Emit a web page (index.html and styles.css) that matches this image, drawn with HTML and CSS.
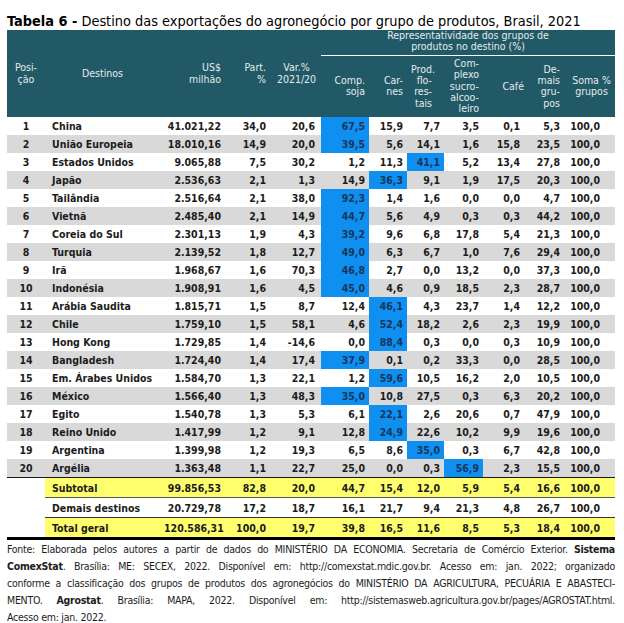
FILE: index.html
```html
<!DOCTYPE html>
<html lang="pt-BR">
<head>
<meta charset="utf-8">
<title>Tabela 6</title>
<link rel="stylesheet" href="styles.css">
</head>
<body>
<div class="page">
  <h1 class="title"><b>Tabela 6 -</b> Destino das exportações do agronegócio por grupo de produtos, Brasil, 2021</h1>
  <table class="tbl">
    <colgroup>
      <col class="c-pos"><col class="c-dest"><col class="c-usd"><col class="c-part"><col class="c-var">
      <col class="c-soja"><col class="c-carn"><col class="c-prod"><col class="c-comp"><col class="c-cafe"><col class="c-dem"><col class="c-soma">
    </colgroup>
    <thead>
      <tr class="h-top">
        <th rowspan="2" class="h-pos">Posi-<br>ção</th>
        <th rowspan="2" class="h-dest">Destinos</th>
        <th rowspan="2" class="h-num">US$<br>milhão</th>
        <th rowspan="2" class="h-num">Part.<br>%</th>
        <th rowspan="2" class="h-var">Var.%<br>2021/20</th>
        <th colspan="7" class="h-group">Representatividade dos grupos de<br>produtos no destino (%)</th>
      </tr>
      <tr class="h-sub">
        <th class="h-num">Comp.<br>soja</th>
        <th class="h-num">Car-<br>nes</th>
        <th class="h-num h-prod">Prod.<br>flo-<br>res-<br>tais</th>
        <th class="h-num h-comp">Com-<br>plexo<br>sucro-<br>alcoo-<br>leiro</th>
        <th class="h-num h-cafe">Café</th>
        <th class="h-num">De-<br>mais<br>gru-<br>pos</th>
        <th class="h-soma">Soma %<br>grupos</th>
      </tr>
    </thead>
    <tbody class="rows">
      <tr><td class="pos">1</td><td class="dest">China</td><td>41.021,22</td><td>34,0</td><td class="var">20,6</td><td class="hl">67,5</td><td>15,9</td><td>7,7</td><td>3,5</td><td>0,1</td><td>5,3</td><td class="soma">100,0</td></tr>
      <tr><td class="pos">2</td><td class="dest">União Europeia</td><td>18.010,16</td><td>14,9</td><td class="var">20,0</td><td class="hl">39,5</td><td>5,6</td><td>14,1</td><td>1,6</td><td>15,8</td><td>23,5</td><td class="soma">100,0</td></tr>
      <tr><td class="pos">3</td><td class="dest">Estados Unidos</td><td>9.065,88</td><td>7,5</td><td class="var">30,2</td><td>1,2</td><td>11,3</td><td class="hl">41,1</td><td>5,2</td><td>13,4</td><td>27,8</td><td class="soma">100,0</td></tr>
      <tr><td class="pos">4</td><td class="dest">Japão</td><td>2.536,63</td><td>2,1</td><td class="var">1,3</td><td>14,9</td><td class="hl">36,3</td><td>9,1</td><td>1,9</td><td>17,5</td><td>20,3</td><td class="soma">100,0</td></tr>
      <tr><td class="pos">5</td><td class="dest">Tailândia</td><td>2.516,64</td><td>2,1</td><td class="var">38,0</td><td class="hl">92,3</td><td>1,4</td><td>1,6</td><td>0,0</td><td>0,0</td><td>4,7</td><td class="soma">100,0</td></tr>
      <tr><td class="pos">6</td><td class="dest">Vietnã</td><td>2.485,40</td><td>2,1</td><td class="var">14,9</td><td class="hl">44,7</td><td>5,6</td><td>4,9</td><td>0,3</td><td>0,3</td><td>44,2</td><td class="soma">100,0</td></tr>
      <tr><td class="pos">7</td><td class="dest">Coreia do Sul</td><td>2.301,13</td><td>1,9</td><td class="var">4,3</td><td class="hl">39,2</td><td>9,6</td><td>6,8</td><td>17,8</td><td>5,4</td><td>21,3</td><td class="soma">100,0</td></tr>
      <tr><td class="pos">8</td><td class="dest">Turquia</td><td>2.139,52</td><td>1,8</td><td class="var">12,7</td><td class="hl">49,0</td><td>6,3</td><td>6,7</td><td>1,0</td><td>7,6</td><td>29,4</td><td class="soma">100,0</td></tr>
      <tr><td class="pos">9</td><td class="dest">Irã</td><td>1.968,67</td><td>1,6</td><td class="var">70,3</td><td class="hl">46,8</td><td>2,7</td><td>0,0</td><td>13,2</td><td>0,0</td><td>37,3</td><td class="soma">100,0</td></tr>
      <tr><td class="pos">10</td><td class="dest">Indonésia</td><td>1.908,91</td><td>1,6</td><td class="var">4,5</td><td class="hl">45,0</td><td>4,6</td><td>0,9</td><td>18,5</td><td>2,3</td><td>28,7</td><td class="soma">100,0</td></tr>
      <tr><td class="pos">11</td><td class="dest">Arábia Saudita</td><td>1.815,71</td><td>1,5</td><td class="var">8,7</td><td>12,4</td><td class="hl">46,1</td><td>4,3</td><td>23,7</td><td>1,4</td><td>12,2</td><td class="soma">100,0</td></tr>
      <tr><td class="pos">12</td><td class="dest">Chile</td><td>1.759,10</td><td>1,5</td><td class="var">58,1</td><td>4,6</td><td class="hl">52,4</td><td>18,2</td><td>2,6</td><td>2,3</td><td>19,9</td><td class="soma">100,0</td></tr>
      <tr><td class="pos">13</td><td class="dest">Hong Kong</td><td>1.729,85</td><td>1,4</td><td class="var">-14,6</td><td>0,0</td><td class="hl">88,4</td><td>0,3</td><td>0,0</td><td>0,3</td><td>10,9</td><td class="soma">100,0</td></tr>
      <tr><td class="pos">14</td><td class="dest">Bangladesh</td><td>1.724,40</td><td>1,4</td><td class="var">17,4</td><td class="hl">37,9</td><td>0,1</td><td>0,2</td><td>33,3</td><td>0,0</td><td>28,5</td><td class="soma">100,0</td></tr>
      <tr><td class="pos">15</td><td class="dest">Em. Árabes Unidos</td><td>1.584,70</td><td>1,3</td><td class="var">22,1</td><td>1,2</td><td class="hl">59,6</td><td>10,5</td><td>16,2</td><td>2,0</td><td>10,5</td><td class="soma">100,0</td></tr>
      <tr><td class="pos">16</td><td class="dest">México</td><td>1.566,40</td><td>1,3</td><td class="var">48,3</td><td class="hl">35,0</td><td>10,8</td><td>27,5</td><td>0,3</td><td>6,3</td><td>20,2</td><td class="soma">100,0</td></tr>
      <tr><td class="pos">17</td><td class="dest">Egito</td><td>1.540,78</td><td>1,3</td><td class="var">5,3</td><td>6,1</td><td class="hl">22,1</td><td>2,6</td><td>20,6</td><td>0,7</td><td>47,9</td><td class="soma">100,0</td></tr>
      <tr><td class="pos">18</td><td class="dest">Reino Unido</td><td>1.417,99</td><td>1,2</td><td class="var">9,1</td><td>12,8</td><td class="hl">24,9</td><td>22,6</td><td>10,2</td><td>9,9</td><td>19,6</td><td class="soma">100,0</td></tr>
      <tr><td class="pos">19</td><td class="dest">Argentina</td><td>1.399,98</td><td>1,2</td><td class="var">19,3</td><td>6,5</td><td>8,6</td><td class="hl">35,0</td><td>0,3</td><td>6,7</td><td>42,8</td><td class="soma">100,0</td></tr>
      <tr class="last"><td class="pos">20</td><td class="dest">Argélia</td><td>1.363,48</td><td>1,1</td><td class="var">22,7</td><td>25,0</td><td>0,0</td><td>0,3</td><td class="hl">56,9</td><td>2,3</td><td>15,5</td><td class="soma">100,0</td></tr>
    </tbody>
    <tbody class="totals">
      <tr class="yellow"><td class="pos"></td><td class="dest">Subtotal</td><td>99.856,53</td><td>82,8</td><td class="var">20,0</td><td>44,7</td><td>15,4</td><td>12,0</td><td>5,9</td><td>5,4</td><td>16,6</td><td class="soma">100,0</td></tr>
      <tr class="mid"><td class="pos"></td><td class="dest">Demais destinos</td><td>20.729,78</td><td>17,2</td><td class="var">18,7</td><td>16,1</td><td>21,7</td><td>9,4</td><td>21,3</td><td>4,8</td><td>26,7</td><td class="soma">100,0</td></tr>
      <tr class="yellow total"><td class="pos"></td><td class="dest">Total geral</td><td>120.586,31</td><td>100,0</td><td class="var">19,7</td><td>39,8</td><td>16,5</td><td>11,6</td><td>8,5</td><td>5,3</td><td>18,4</td><td class="soma">100,0</td></tr>
    </tbody>
  </table>
  <div class="source">
    <span class="jl">Fonte: Elaborada pelos autores a partir de dados do MINISTÉRIO DA ECONOMIA. Secretaria de Comércio Exterior. <b>Sistema</b></span>
    <span class="jl"><b>ComexStat</b>. Brasília: ME: SECEX, 2022. Disponível em: http://comexstat.mdic.gov.br. Acesso em: jan. 2022; organizado</span>
    <span class="jl">conforme a classificação dos grupos de produtos dos agronegócios do MINISTÉRIO DA AGRICULTURA, PECUÁRIA E ABASTECI-</span>
    <span class="jl">MENTO. <b>Agrostat</b>. Brasília: MAPA, 2022. Disponível em: http://sistemasweb.agricultura.gov.br/pages/AGROSTAT.html.</span>
    <span class="ll">Acesso em: jan. 2022.</span>
  </div>
</div>
</body>
</html>
```
FILE: styles.css
```css
html, body {
  margin: 0;
  padding: 0;
  background: #ffffff;
}
.page {
  padding: 12px 9px 0 7px;
  font-family: "DejaVu Sans", "Liberation Sans", sans-serif;
  font-stretch: condensed;
  color: #1c1c1c;
}
.title {
  margin: 0;
  font-size: 14.4px;
  line-height: 18px;
  font-weight: normal;
  color: #000;
  white-space: nowrap;
}
.title b { font-weight: bold; }
.tbl {
  width: 608px;
  border-collapse: collapse;
  border-spacing: 0;
  table-layout: fixed;
  font-size: 10.5px;
}
.c-pos { width: 38px; }
.c-dest { width: 115px; }
.c-usd { width: 65px; }
.c-part { width: 45px; }
.c-var { width: 51px; }
.c-soja { width: 48px; }
.c-carn { width: 38px; }
.c-prod { width: 37px; }
.c-comp { width: 39px; }
.c-cafe { width: 41px; }
.c-dem { width: 40px; }
.c-soma { width: 51px; }

thead th {
  background: #215967;
  color: #e4eaec;
  font-weight: normal;
  line-height: 11.25px;
  padding: 0 4px;
  vertical-align: middle;
  white-space: nowrap;
}
.h-top { height: 25px; }
.h-sub { height: 62px; }
.h-pos { text-align: center; }
.h-dest { text-align: center; }
.h-num { text-align: right; }
.h-var { text-align: center; padding-left: 6px; }
.h-group {
  text-align: center;
  border-bottom: 1.5px solid #ffffff;
  vertical-align: top;
  padding-top: 0;
}
.h-prod { padding-right: 12px; }
.h-cafe { padding-right: 0; }
.h-soma { text-align: center; padding: 0 0 0 4px; }

.tbl td {
  height: 18px;
  padding: 0 4px;
  text-align: right;
  font-weight: bold;
  white-space: nowrap;
  line-height: 12px;
}
.rows tr:nth-child(even) td { background: #d9d9d9; }
.rows tr td.hl { background: #0f8ff0; color: #18365a; }
.tbl td.pos { text-align: center; padding: 0; }
.tbl td.dest { text-align: left; padding-left: 7px; }
.tbl td.var { padding-right: 6px; }
.tbl td.soma { padding-right: 15px; }
.rows tr.last td { border-bottom: 1.5px solid #1a1a1a; }

.totals td { height: 19px; }
.totals tr.yellow td { background: #ffff6e; }
.totals tr.mid td { background: #ffffff; }
.totals tr td.pos { background: #ffffff; }
.totals tr.mid td:not(.pos) { border-top: 1px solid #555555; border-bottom: 1px solid #333333; }
.totals tr.total td { border-bottom: 3px solid #000000; }

.source {
  margin-top: 1px;
  font-size: 10.5px;
  letter-spacing: -0.25px;
  line-height: 17px;
  color: #1c1c1c;
  width: 608px;
}
.source span { display: block; white-space: nowrap; }
.source .jl { text-align: justify; text-align-last: justify; }
.source b { font-weight: bold; }
```
